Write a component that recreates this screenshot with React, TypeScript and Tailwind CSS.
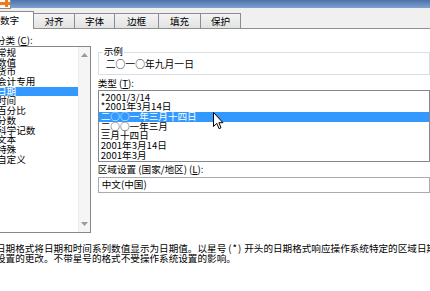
const CATEGORIES = [
  "常规",
  "数值",
  "货币",
  "会计专用",
  "日期",
  "时间",
  "百分比",
  "分数",
  "科学记数",
  "文本",
  "特殊",
  "自定义",
];

const TYPES = [
  "*2001/3/14",
  "*2001年3月14日",
  "二○○一年三月十四日",
  "二○○一年三月",
  "三月十四日",
  "2001年3月14日",
  "2001年3月",
];

const TABS = [
  { label: "对齐", w: "w-[42px]" },
  { label: "字体", w: "w-[41px]" },
  { label: "边框", w: "w-[45px]" },
  { label: "填充", w: "w-[43px]" },
  { label: "保护", w: "w-[41px]" },
];

function TitleIcon() {
  return (
    <svg width="11" height="9" viewBox="0 0 11 9" className="block">
      <rect x="-2" y="-2" width="12.5" height="10.5" fill="#fafafa" stroke="#8a8a8a" />
      <rect x="5" y="0" width="3" height="7" fill="#f07a1a" />
      <rect x="0" y="2" width="10" height="3" fill="#f07a1a" />
    </svg>
  );
}

function Cursor() {
  return (
    <svg width="11" height="18" viewBox="0 0 11 18" className="absolute left-[213px] top-[112px]">
      <path
        d="M0.5 0.5 L0.5 14.5 L3.8 11.4 L6 16.6 L8 15.8 L5.9 10.7 L10 10.7 Z"
        fill="#ffffff"
        stroke="#000000"
        strokeWidth="1"
        strokeLinejoin="round"
      />
    </svg>
  );
}

function Arrow({ down }: { down?: boolean }) {
  return (
    <svg width="7" height="4" viewBox="0 0 7 4" className="block">
      <path d={down ? "M0 0 L7 0 L3.5 4 Z" : "M0 4 L7 4 L3.5 0 Z"} fill="#9a9a9a" />
    </svg>
  );
}

export default function App() {
  return (
    <div className="relative h-[291px] w-[430px] overflow-hidden bg-white font-['Noto_Sans_CJK_SC',sans-serif] text-[9.6px] leading-[9.7px] text-black">
      {/* title bar */}
      <div className="h-[8px] bg-gradient-to-b from-[#4d72aa] to-[#7fa2d2]">
        <TitleIcon />
      </div>

      {/* tab strip */}
      <div className="flex h-[21px] items-end border-b border-[#8e8f8f] bg-[#f0f0f0]">
        <div className="relative z-10 -mb-px ml-[-12px] flex h-[18px] w-[46px] items-center justify-center border border-b-0 border-[#898c95] bg-white pr-[3px]">
          数字
        </div>
        {TABS.map((t) => (
          <div
            key={t.label}
            className={`-ml-px flex h-[15px] items-center justify-center border border-b-0 border-[#898c95] bg-gradient-to-b from-[#f4f4f4] to-[#e2e2e2] pt-px ${t.w}`}
          >
            {t.label}
          </div>
        ))}
      </div>

      <div className="flex">
        {/* category column */}
        <div className="ml-[-5px] flex w-[98px] flex-col pt-[5px]">
          <div className="h-[12px] pl-[1px] leading-[12px]">
            分类 (<span className="underline">C</span>):
          </div>
          <div className="flex h-[187px] border border-[#828790]">
            <div className="flex flex-1 flex-col pt-px">
              {CATEGORIES.map((c) => (
                <div
                  key={c}
                  className={`h-[9.7px] whitespace-nowrap pl-[1px] ${c === "日期" ? "bg-[#3399ff] text-white" : ""}`}
                >
                  {c}
                </div>
              ))}
            </div>
            <div className="flex w-[12px] flex-col items-center justify-between border-l border-[#ececec] bg-[#f5f5f5] pb-[6px] pt-[6px]">
              <Arrow />
              <Arrow down />
            </div>
          </div>
        </div>

        {/* right side */}
        <div className="ml-[7px] flex w-[340px] flex-col">
          <div className="relative mt-[23px] h-[23px] border border-[#d5dfe5] pl-[7px] pt-[7px]">
            <span className="absolute left-[4px] top-[-6px] bg-white px-[1px]">示例</span>
            <div className="whitespace-nowrap text-[9.8px]">二○一○年九月一日</div>
          </div>

          <div className="mt-[2px] h-[12px] leading-[12px]">
            类型 (<span className="underline">T</span>):
          </div>
          <div className="mt-px flex h-[72px] flex-col border border-[#828790] pt-[1.5px]">
            {TYPES.map((t) => (
              <div
                key={t}
                className={`h-[9.7px] whitespace-nowrap pl-[2px] ${t === "二○○一年三月十四日" ? "bg-[#3399ff] text-white" : ""}`}
              >
                {t}
              </div>
            ))}
          </div>

          <div className="mt-px h-[12px] leading-[12px]">
            区域设置 (国家/地区) (<span className="underline">L</span>):
          </div>
          <div className="mt-[2px] flex h-[16px] items-center border border-[#a9abb2] pl-[3px]">
            中文(中国)
          </div>
        </div>
      </div>

      {/* description */}
      <div className="ml-[-4px] mt-[11px] leading-[9.5px]">
        <div className="whitespace-nowrap">
          日期格式将日期和时间系列数值显示为日期值。以星号
          <span className="px-[2px] tracking-[1px]">(*)</span>
          开头的日期格式响应操作系统特定的区域日期
        </div>
        <div className="whitespace-nowrap">设置的更改。不带星号的格式不受操作系统设置的影响。</div>
      </div>

      <Cursor />
    </div>
  );
}
